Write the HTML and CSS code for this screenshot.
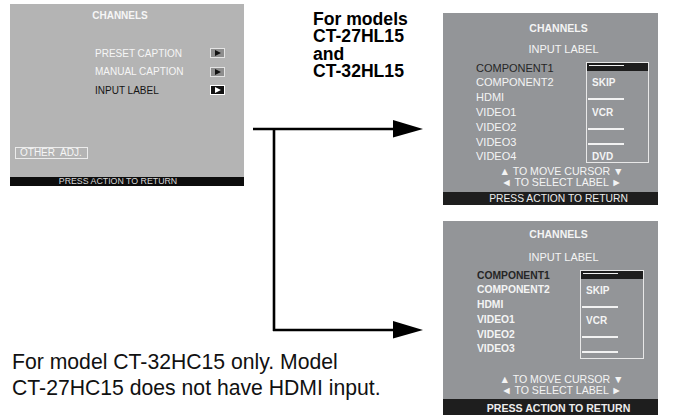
FILE: index.html
```html
<!DOCTYPE html>
<html>
<head>
<meta charset="utf-8">
<link rel="stylesheet" href="styles.css">
</head>
<body>
<div class="page">
  <div class="left">
    <div class="osd1">
      <div class="osd1-title">CHANNELS</div>
      <div class="osd1-menu">
        <div class="osd1-row"><span class="osd1-label">PRESET CAPTION</span><span class="go"><i class="tri"></i></span></div>
        <div class="osd1-row"><span class="osd1-label">MANUAL CAPTION</span><span class="go"><i class="tri"></i></span></div>
        <div class="osd1-row is-active"><span class="osd1-label">INPUT LABEL</span><span class="go go-active"><i class="tri"></i></span></div>
      </div>
      <div class="other-adj">OTHER&nbsp; ADJ.</div>
      <div class="osd1-foot">PRESS ACTION TO RETURN</div>
    </div>
  </div>

  <div class="mid">
    <div class="models">
      <div class="models-line">For models</div>
      <div class="models-line">CT-27HL15</div>
      <div class="models-line">and</div>
      <div class="models-line">CT-32HL15</div>
    </div>
  </div>

  <div class="right">
    <div class="osd osd-a">
      <div class="osd-title">CHANNELS</div>
      <div class="osd-sub">INPUT LABEL</div>
      <div class="osd-list">
        <ul class="names">
          <li class="cur">COMPONENT1</li>
          <li>COMPONENT2</li>
          <li>HDMI</li>
          <li>VIDEO1</li>
          <li>VIDEO2</li>
          <li>VIDEO3</li>
          <li>VIDEO4</li>
        </ul>
        <div class="labels">
          <div class="slot slot-first"><div class="selbar"><span class="dash"></span></div></div>
          <div class="slot">SKIP</div>
          <div class="slot"><span class="rule"></span></div>
          <div class="slot">VCR</div>
          <div class="slot"><span class="rule"></span></div>
          <div class="slot"><span class="rule"></span></div>
          <div class="slot">DVD</div>
        </div>
      </div>
      <div class="hint">&#9650; TO MOVE CURSOR &#9660;</div>
      <div class="hint">&#9668; TO SELECT LABEL &#9658;</div>
      <div class="osd-foot">PRESS ACTION TO RETURN</div>
    </div>

    <div class="osd osd-b">
      <div class="osd-title">CHANNELS</div>
      <div class="osd-sub">INPUT LABEL</div>
      <div class="osd-list">
        <ul class="names">
          <li class="cur">COMPONENT1</li>
          <li>COMPONENT2</li>
          <li>HDMI</li>
          <li>VIDEO1</li>
          <li>VIDEO2</li>
          <li>VIDEO3</li>
        </ul>
        <div class="labels">
          <div class="slot slot-first"><div class="selbar"><span class="dash"></span></div></div>
          <div class="slot">SKIP</div>
          <div class="slot"><span class="rule"></span></div>
          <div class="slot">VCR</div>
          <div class="slot"><span class="rule"></span></div>
          <div class="slot"><span class="rule"></span></div>
        </div>
      </div>
      <div class="hint">&#9650; TO MOVE CURSOR &#9660;</div>
      <div class="hint">&#9668; TO SELECT LABEL &#9658;</div>
      <div class="osd-foot">PRESS ACTION TO RETURN</div>
    </div>
  </div>

  <p class="note">For model CT-32HC15 only. Model<br>CT-27HC15 does not have HDMI input.</p>

  <svg class="arrows" width="685" height="415" viewBox="0 0 685 415">
    <path d="M253 129 H396 M274 130 V331 M273 330 H396" stroke="#000" stroke-width="2.6" fill="none"/>
    <polygon points="393,120 423,129 393,137.5" fill="#000"/>
    <polygon points="393,321 423,330 393,338.5" fill="#000"/>
  </svg>
</div>
</body>
</html>
```

FILE: styles.css
```css
* { box-sizing: border-box; }
html, body { margin: 0; padding: 0; background: #fff; }
body { font-family: "Liberation Sans", Arial, sans-serif; }

.page {
  position: relative;
  width: 685px;
  height: 415px;
  overflow: hidden;
  display: grid;
  grid-template-columns: 313px 130px 215px;
  grid-template-rows: 200px 1fr;
}

/* ---------- left OSD ---------- */
.left { grid-column: 1; grid-row: 1; padding: 4px 0 0 10px; }
.osd1 {
  width: 234px;
  height: 182px;
  background: #b4b4b4;
  display: flex;
  flex-direction: column;
  color: #f6f6f6;
  font-size: 10px;
}
.osd1-title {
  font-weight: bold;
  line-height: 12px;
  margin-top: 6px;
  padding-right: 14px;
  text-align: center;
}
.osd1-menu { margin-top: 22px; padding-left: 85px; }
.osd1-row { display: flex; align-items: center; height: 18.5px; }
.osd1-label { width: 115px; }
.is-active .osd1-label { color: #151515; }
.go {
  width: 15px;
  height: 10px;
  border: 1px solid #e4e4e4;
  background: #8e8e8e;
  display: flex;
  align-items: center;
  justify-content: center;
}
.tri {
  display: block;
  width: 0; height: 0;
  border-top: 3.5px solid transparent;
  border-bottom: 3.5px solid transparent;
  border-left: 6px solid #111;
  margin-left: 1px;
}
.go-active { background: #111; border-color: #fff; }
.go-active .tri { border-left-color: #fff; }

.other-adj {
  margin-top: auto;
  margin-left: 5px;
  width: 73px;
  height: 12px;
  border: 1px solid #ececec;
  line-height: 10px;
  padding-left: 4px;
  white-space: nowrap;
}
.osd1-foot {
  margin-top: 18px;
  height: 9px;
  background: #0d0d0d;
  color: #d8d8d8;
  font-size: 8.8px;
  line-height: 9px;
  text-align: center;
  padding-right: 18px;
  white-space: nowrap;
}

/* ---------- middle caption ---------- */
.mid { grid-column: 2; grid-row: 1; }
.models {
  margin-top: 11px;
  font-weight: bold;
  font-size: 17.6px;
  color: #000;
}
.models-line { height: 17.3px; line-height: 17.3px; white-space: nowrap; }

/* ---------- right OSDs ---------- */
.right { grid-column: 3; grid-row: 1 / 3; }
.osd {
  width: 215px;
  background: #939598;
  color: #f4f4f4;
  display: flex;
  flex-direction: column;
}
.osd-a { margin-top: 13px; height: 192px; }
.osd-b { margin-top: 16px; height: 198px; }

.osd-title {
  font-weight: bold;
  font-size: 10.5px;
  line-height: 13px;
  text-align: center;
  padding-left: 16px;
}
.osd-sub {
  font-size: 11px;
  line-height: 13px;
  text-align: center;
  padding-left: 26px;
}
.osd-a .osd-title { margin-top: 8.5px; }
.osd-a .osd-sub { margin-top: 8px; }
.osd-b .osd-title { margin-top: 6.5px; }
.osd-b .osd-sub { margin-top: 10px; }

.osd-list { display: flex; margin-top: 5px; }

.names {
  list-style: none;
  margin: 0;
  padding: 0;
  font-size: 11px;
  line-height: 14.83px;
}
.osd-a .names { margin-left: 33px; width: 110px; }
.osd-b .names { margin-left: 34px; width: 103px; font-weight: bold; font-size: 10.3px; line-height: 14.8px; }
.names .cur { color: #262626; }

.labels {
  border: 1px solid #e8e8e8;
  margin-top: 1.4px;
  display: flex;
  flex-direction: column;
  font-weight: bold;
  font-size: 10px;
}
.osd-a .labels { width: 63px; height: 101px; }
.osd-b .labels { width: 64px; height: 89px; }

.slot {
  height: 14.83px;
  flex: none;
  display: flex;
  align-items: center;
  padding-left: 5px;
}
.slot-first { height: 12.4px; align-items: flex-start; padding-left: 0; }
.selbar {
  width: 100%;
  height: 8px;
  background: #1e1e1e;
  padding: 2px 0 0 2px;
}
.dash { display: block; width: 35px; height: 1.6px; background: #f2f2f2; }
.rule {
  display: block;
  width: 36px;
  height: 2px;
  background: #f2f2f2;
  margin-left: -4px;
  margin-top: 3px;
}

.hint {
  font-size: 10.6px;
  line-height: 11px;
  text-align: center;
  padding-left: 22px;
  white-space: nowrap;
}
.osd-a .osd-list + .hint { margin-top: 2px; }
.osd-b .osd-list + .hint { margin-top: 15px; }

.osd-foot {
  margin-top: auto;
  background: #1e1e1e;
  color: #ececec;
  text-align: center;
  white-space: nowrap;
  padding-left: 16px;
}
.osd-a .osd-foot { height: 13px; font-size: 10.3px; line-height: 13px; }
.osd-b .osd-foot { height: 20px; font-size: 10.6px; font-weight: bold; line-height: 18px; }

/* ---------- bottom note ---------- */
.note {
  grid-column: 1 / 3;
  grid-row: 2;
  margin: 149px 0 0 12px;
  font-size: 21.2px;
  line-height: 26px;
  color: #111;
  white-space: nowrap;
}

/* ---------- connector arrows (overlay) ---------- */
.arrows { position: absolute; left: 0; top: 0; pointer-events: none; }
```
